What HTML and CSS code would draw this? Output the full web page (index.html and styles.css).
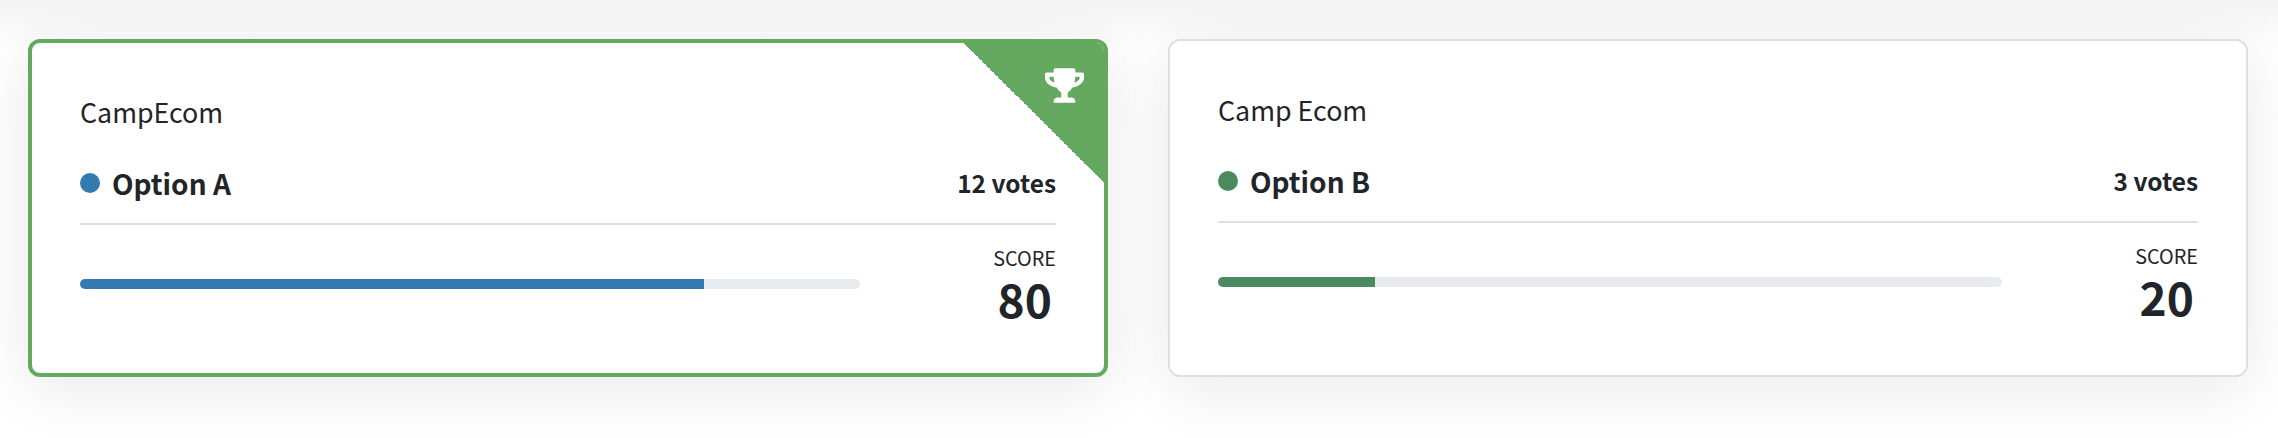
FILE: index.html
```html
<!DOCTYPE html>
<html lang="en">
<head>
<meta charset="utf-8">
<title>Poll results</title>
<link rel="stylesheet" href="styles.css">
</head>
<body>
<main class="grid">
  <section class="card card-winner">
    <div class="ribbon">
      <svg class="trophy" viewBox="0 0 576 512" aria-hidden="true"><path d="M552 64H448V24c0-13.3-10.7-24-24-24H152c-13.3 0-24 10.7-24 24v40H24C10.7 64 0 74.7 0 88v56c0 35.7 22.5 72.4 61.9 100.7 31.5 22.7 69.8 37.1 110 41.7C203.3 338.5 240 360 240 360v72h-48c-35.3 0-64 20.7-64 56v12c0 6.6 5.4 12 12 12h296c6.6 0 12-5.4 12-12v-12c0-35.3-28.7-56-64-56h-48v-72s36.7-21.5 68.1-73.6c40.3-4.6 78.7-19 110-41.7 39.3-28.3 61.9-65 61.9-100.7V88c0-13.3-10.7-24-24-24zM99.3 192.8C74.9 175.2 64 155.6 64 144v-16h64.2c1 32.6 5.8 61.2 12.8 86.2-15.1-5.2-29.2-12.4-41.7-21.4zM512 144c0 16.1-17.7 36.1-35.3 48.8-12.5 9-26.7 16.2-41.8 21.4 7-25 11.8-53.6 12.8-86.2H512v16z"/></svg>
    </div>
    <div class="campaign">CampEcom</div>
    <div class="option-row">
      <div class="option"><span class="dot dot-blue"></span><span class="option-name">Option A</span></div>
      <div class="votes">12 votes</div>
    </div>
    <div class="result-row">
      <div class="track"><div class="fill fill-blue" style="width:80%"></div></div>
      <div class="score"><div class="score-label">SCORE</div><div class="score-value">80</div></div>
    </div>
  </section>
  <section class="card">
    <div class="campaign">Camp Ecom</div>
    <div class="option-row">
      <div class="option"><span class="dot dot-green"></span><span class="option-name">Option B</span></div>
      <div class="votes">3 votes</div>
    </div>
    <div class="result-row">
      <div class="track"><div class="fill fill-green" style="width:20%"></div></div>
      <div class="score"><div class="score-label">SCORE</div><div class="score-value">20</div></div>
    </div>
  </section>
</main>
</body>
</html>
```
FILE: styles.css
```css
* { box-sizing: border-box; }
html, body { margin: 0; background: #fff; }
body {
  height: 438px;
  overflow: hidden;
  font-family: "Noto Sans CJK SC", "Noto Sans", sans-serif;
  color: #212529;
  background: linear-gradient(#f4f4f4, #fff 50px);
}
.grid {
  display: grid;
  grid-template-columns: 1fr 1fr;
  gap: 60px;
  padding: 39px 30px 0 28px;
}
.card {
  position: relative;
  height: 338px;
  padding: 48px;
  background: #fff;
  border: 2px solid #e0e0e0;
  border-radius: 12px;
  box-shadow: 0 12px 64px rgba(0, 0, 0, .09);
  overflow: hidden;
}
.card-winner { border: 4px solid #65a85f; }
.ribbon {
  position: absolute;
  top: 0;
  right: 0;
  width: 140px;
  height: 140px;
  background: linear-gradient(to top right, transparent 50%, #65a85f 50%);
}
.trophy {
  position: absolute;
  top: 25px;
  right: 20px;
  width: 39px;
  height: 35px;
  fill: #fff;
}
.campaign {
  font-size: 26.8px;
  line-height: 42px;
  margin-bottom: 28px;
}
.option-row {
  display: flex;
  justify-content: space-between;
  align-items: center;
  height: 44px;
}
.option { display: flex; align-items: center; gap: 12px; }
.dot { width: 20px; height: 20px; border-radius: 50%; }
.dot-blue { background: #337ab0; }
.dot-green { background: #4a8a5e; }
.option-name { font-size: 28px; font-weight: 700; line-height: 44px; }
.votes { font-size: 24.4px; font-weight: 700; line-height: 44px; }
.result-row {
  display: flex;
  align-items: center;
  margin-top: 18px;
  padding-top: 19px;
  border-top: 2px solid #dee2e6;
}
.track {
  flex: 1;
  height: 10px;
  background: #e9ecef;
  border-radius: 5px;
  overflow: hidden;
}
.fill { height: 100%; }
.fill-blue { background: #337ab0; }
.fill-green { background: #4a8a5e; }
.score { margin-left: 133px; text-align: center; }
.score-label { font-size: 19.8px; line-height: 28px; }
.score-value { font-size: 46px; font-weight: 700; line-height: 52px; }
```
